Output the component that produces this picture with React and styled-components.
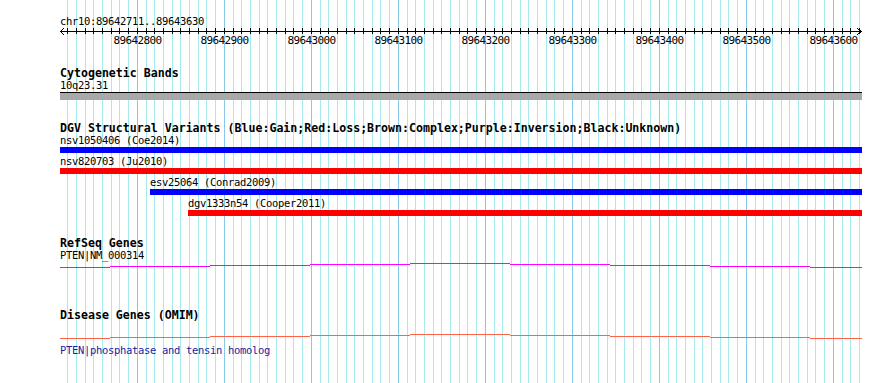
import React from 'react'
import styled, { createGlobalStyle } from 'styled-components'

const PANEL_WIDTH = 802
const BP_PX = 0.87
const REF_BP = 89642800
const REF_X = 77.3

// pixel column inside the panel for a base position
const col = (bp) => Math.floor(REF_X + (bp - REF_BP) * BP_PX)

const gridStops = []
for (let bp = 89642720; bp <= 89643630; bp += 10) gridStops.push(bp)

const GlobalStyle = createGlobalStyle`
    html, body {
        margin: 0;
        background: #ffffff;
    }
    body {
        font-family: "DejaVu Sans Mono", "Liberation Mono", monospace;
        color: #000000;
    }
`

const Page = styled.div`
    height: 383px;
    padding-left: 60px;
    overflow: hidden;
`

const Panel = styled.div`
    position: relative;
    width: ${PANEL_WIDTH}px;
    height: 383px;
`

const GridLayer = styled.svg`
    position: absolute;
    top: 0;
    left: 0;
    z-index: 0;
`

const Tracks = styled.div`
    position: relative;
    z-index: 1;
    display: flex;
    flex-direction: column;
    padding-top: 16px;
`

const Small = styled.div`
    font-size: 10.5px;
    letter-spacing: -0.32px;
    line-height: 11px;
    height: 11px;
    white-space: pre;
    margin-top: ${p => p.$top || 0}px;
    color: ${p => p.$color || '#000'};
`

const TrackTitle = styled.div`
    font-size: 11.6px;
    font-weight: bold;
    line-height: 12px;
    height: 12px;
    white-space: pre;
    margin-top: ${p => p.$top || 0}px;
    margin-bottom: ${p => p.$gap || 0}px;
`

const Drawing = styled.svg`
    display: block;
    margin-top: ${p => p.$top || 0}px;
`

const BandBar = styled.div`
    margin-top: 1px;
    height: 7px;
    border-top: 1px solid #000;
    background: #a9a9a9;
`

const FeatureRow = styled.div`
    display: flex;
    flex-direction: column;
    padding-left: ${p => p.$offset}px;
    margin-bottom: 3px;
    margin-top: ${p => p.$top || 0}px;
`

const Bar = styled.div`
    height: 6px;
    margin-top: 1px;
    background: ${p => p.$color};
`

const variants = [
    { name: 'nsv1050406 (Coe2014)', color: '#0000ff', offset: 0 },
    { name: 'nsv820703 (Ju2010)', color: '#ff0000', offset: 0 },
    { name: 'esv25064 (Conrad2009)', color: '#0000ff', offset: 90 },
    { name: 'dgv1333n54 (Cooper2011)', color: '#ff0000', offset: 128 },
]

const bounds = [0, 50, 150, 250, 350, 450, 550, 650, 750, 802]
const lift = [6, 5, 4, 3, 2, 3, 4, 5, 6]

function Grid() {
    return (
        <GridLayer width={PANEL_WIDTH} height={383} shapeRendering="crispEdges">
            {gridStops.map(bp => (
                <rect key={bp} x={col(bp)} y={0} width={1} height={383}
                    fill={bp % 100 === 0 ? '#86c9ec' : '#a6eaee'} />
            ))}
        </GridLayer>
    )
}

function Ruler() {
    return (
        <Drawing width={PANEL_WIDTH} height={20} shapeRendering="crispEdges">
            <rect x={0} y={4} width={PANEL_WIDTH} height={1} fill="#000" />
            {gridStops.map(bp => (
                <rect key={bp} x={col(bp)} y={1} width={1} height={6} fill="#000" />
            ))}
            <polyline points="4,1 0.5,4.5 4,8" fill="none" stroke="#000" strokeWidth="1" />
            <polyline points="797,1 801.5,4.5 797,8" fill="none" stroke="#000" strokeWidth="1" />
            {gridStops.filter(bp => bp % 100 === 0).map(bp => (
                <text key={bp} x={col(bp) + 0.5} y={17} textAnchor="middle"
                    fontSize="11" letterSpacing="-0.62"
                    fontFamily='"DejaVu Sans Mono", "Liberation Mono", monospace'>
                    {bp}
                </text>
            ))}
        </Drawing>
    )
}

function GeneLine({ color, top }) {
    return (
        <Drawing $top={top} width={PANEL_WIDTH} height={9} shapeRendering="crispEdges">
            {lift.map((y, i) => (
                <rect key={i} x={bounds[i]} y={y} width={bounds[i + 1] - bounds[i]} height={1} fill={color} />
            ))}
        </Drawing>
    )
}

export default function App() {
    return (
        <Page>
            <GlobalStyle />
            <Panel>
                <Grid />
                <Tracks>
                    <Small>chr10:89642711..89643630</Small>
                    <Ruler />

                    <TrackTitle $top={20} $gap={1}>Cytogenetic Bands</TrackTitle>
                    <Small>10q23.31</Small>
                    <BandBar />

                    <TrackTitle $top={22}>DGV Structural Variants (Blue:Gain;Red:Loss;Brown:Complex;Purple:Inversion;Black:Unknown)</TrackTitle>
                    {variants.map((v, i) => (
                        <FeatureRow key={v.name} $offset={v.offset} $top={i === 0 ? 1 : 0}>
                            <Small>{v.name}</Small>
                            <Bar $color={v.color} />
                        </FeatureRow>
                    ))}

                    <TrackTitle $top={18} $gap={1}>RefSeq Genes</TrackTitle>
                    <Small>PTEN|NM_000314</Small>
                    <GeneLine color="#ff00ff" top={0} />

                    <TrackTitle $top={39}>Disease Genes (OMIM)</TrackTitle>
                    <GeneLine color="#ff6347" top={11} />
                    <Small $top={4} $color="#1c1ca0">PTEN|phosphatase and tensin homolog</Small>
                </Tracks>
            </Panel>
        </Page>
    )
}
